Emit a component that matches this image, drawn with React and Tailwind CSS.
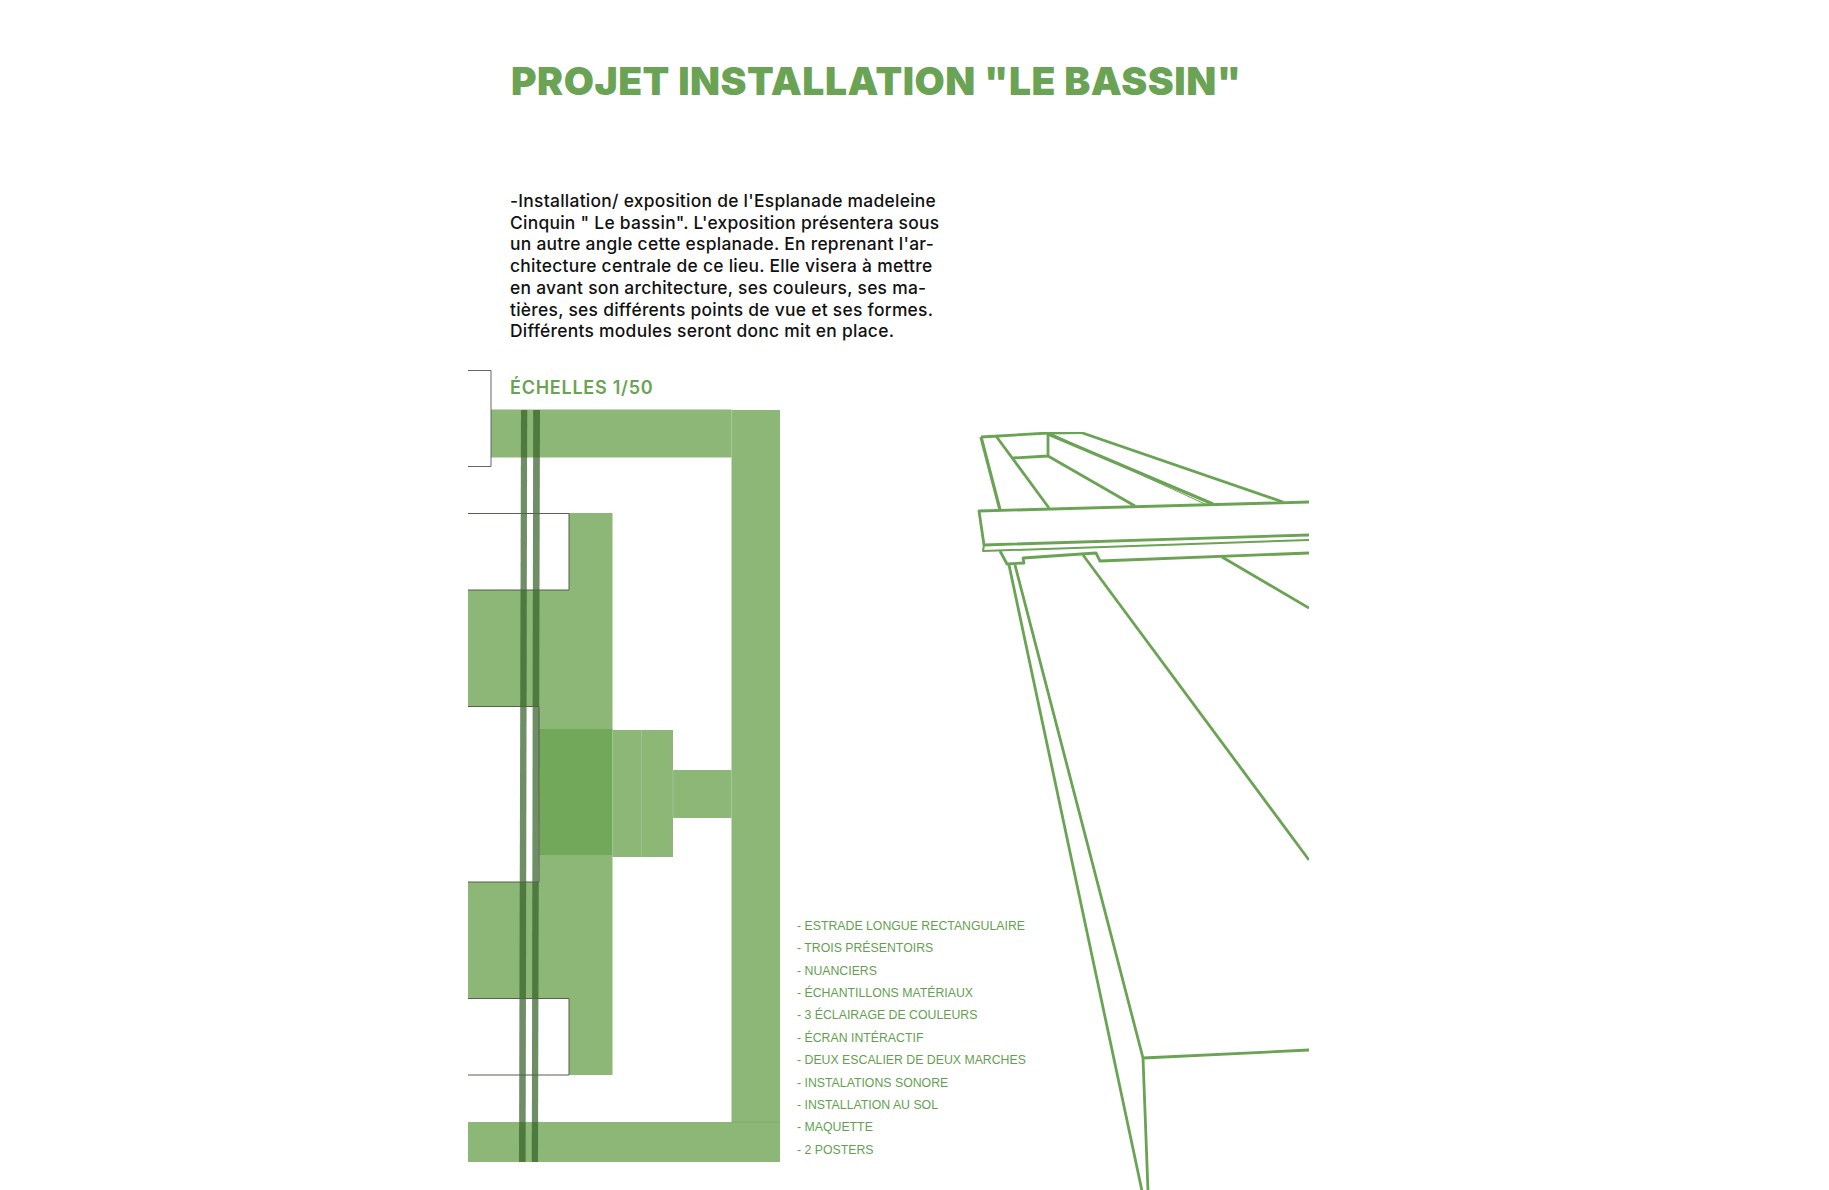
import React from 'react';

const paragraph = [
  "-Installation/ exposition de l'Esplanade madeleine",
  'Cinquin " Le bassin". L\'exposition présentera sous',
  "un autre angle cette esplanade. En reprenant l'ar-",
  'chitecture centrale de ce lieu. Elle visera à mettre',
  'en avant son architecture, ses couleurs, ses ma-',
  'tières, ses différents points de vue et ses formes.',
  'Différents modules seront donc mit en place.',
];

const items = [
  'ESTRADE LONGUE RECTANGULAIRE',
  'TROIS PRÉSENTOIRS',
  'NUANCIERS',
  'ÉCHANTILLONS MATÉRIAUX',
  '3 ÉCLAIRAGE DE COULEURS',
  'ÉCRAN INTÉRACTIF',
  'DEUX ESCALIER DE DEUX MARCHES',
  'INSTALATIONS SONORE',
  'INSTALLATION AU SOL',
  'MAQUETTE',
  '2 POSTERS',
];

const PlanDrawing = () => (
  <svg width="312" height="792" viewBox="468 370 312 792" className="block shrink-0">
    <g fill="#8cb776">
      <rect x="491" y="409.5" width="240.5" height="48" />
      <rect x="731.5" y="410" width="48.5" height="712" />
      <rect x="468" y="1122" width="312" height="40" />
      <rect x="569" y="513" width="43.5" height="77" />
      <rect x="468" y="590" width="144.5" height="116" />
      <rect x="539" y="706" width="73.5" height="176" />
      <rect x="468" y="882" width="144.5" height="116" />
      <rect x="569" y="998" width="43.5" height="77" />
      <rect x="612.5" y="730" width="60.5" height="127" />
      <rect x="673" y="770" width="58.5" height="48" />
    </g>
    <rect x="539" y="729" width="73.5" height="126" fill="#72a85a" />

    {/* seams between the modules */}
    <g stroke="#a6c897" strokeWidth="0.75">
      <path d="M731.5 410V457.5" />
      <path d="M641.5 730V857" />
      <path d="M612.5 730V857" />
      <path d="M673 770V818" />
      <path d="M731.5 770V818" />
      <path d="M731.5 1122H780" stroke="#7fab69" />
    </g>

    {/* long double rail */}
    <g fill="#376329" fillOpacity="0.72">
      <polygon points="521,410 527.2,410 525.6,1162 519,1162" />
      <polygon points="533.2,410 540,410 538,1162 531.8,1162" />
    </g>

    {/* steps outlines */}
    <g fill="none" stroke="#55604f" strokeWidth="1">
      <path d="M468 370.5H491V466.5H468" stroke="#666666" />
      <path d="M468 513.5H569V590H468" />
      <path d="M468 706.5H539V882H468" />
      <path d="M468 998.5H569V1075H468" />
    </g>
  </svg>
);

// Perspective view of the platform, cut by the right margin
const PerspectiveDrawing = () => (
  <svg
    width="380"
    height="759"
    viewBox="929 431 380 759"
    fill="none"
    stroke="#6aa354"
    strokeWidth="2.8"
    strokeLinejoin="round"
    className="block shrink-0 -ml-[100px]"
  >
    <path d="M981 436L1048 432L1081 431.5L1283 501" />
    <path d="M981 436L1000 509" strokeWidth="3.2" />
    <path d="M996 435L1049 507" />
    <path d="M1013 457L1048 455L1048 432" />
    <path d="M1048 455L1135 505" />
    <path d="M1048 433L1213 503" strokeWidth="3.2" />
    <path d="M1052 433L1205 503" strokeWidth="1" />
    <path d="M1309 501L979 510L984 544L1309 534" />
    <path d="M984 544L983 550L1309 539" strokeWidth="2" />
    <path d="M1000 550L1007 563L1024 562L1023 557L1096 552L1100 560L1309 552" />
    <path d="M1083 554L1309 859" />
    <path d="M1222 556L1309 607" />
    <path d="M1009 564L1142 1190" />
    <path d="M1015 564L1143 1057L1148 1190" />
    <path d="M1143 1057L1309 1049" />
  </svg>
);

export default function App() {
  return (
    <div className="min-h-screen bg-white">
      <main className="ml-[468px] w-[841px] h-[1190px] overflow-hidden flex flex-col">
        <h1 className="ml-[43px] mt-[57px] text-[39px] leading-[48px] font-black tracking-[0.52px] whitespace-nowrap text-[#6aa354] font-['Inter',sans-serif]">
          PROJET INSTALLATION "LE BASSIN"
        </h1>

        <div className="ml-[42px] mt-[85px] text-[17.4px] leading-[21.7px] font-medium tracking-[0.28px] text-[#111111] whitespace-nowrap font-['Inter',sans-serif]">
          {paragraph.map((line) => (
            <p key={line}>{line}</p>
          ))}
        </div>

        <h2 className="ml-[42px] mt-[33px] -mb-[31px] text-[18px] leading-[26px] font-semibold tracking-[0.75px] text-[#6aa354] whitespace-nowrap font-['Inter',sans-serif]">
          ÉCHELLES 1/50
        </h2>

        <section className="flex items-start">
          <PlanDrawing />
          <ul className="ml-[17px] w-[232px] mt-[545px] shrink-0 text-[12.3px] leading-[22.37px] text-[#649f50] whitespace-nowrap font-['Liberation_Sans',sans-serif]">
            {items.map((item) => (
              <li key={item}>- {item}</li>
            ))}
          </ul>
          <div className="mt-[62px]">
            <PerspectiveDrawing />
          </div>
        </section>
      </main>
    </div>
  );
}
